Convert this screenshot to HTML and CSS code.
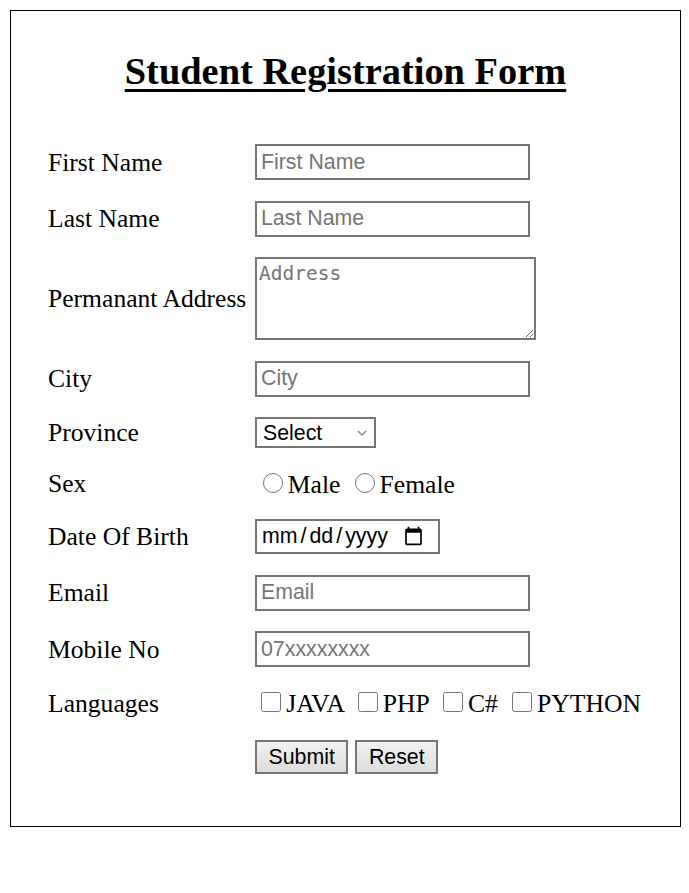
FILE: index.html
```html
<!DOCTYPE html>
<html lang="en">
<head>
<meta charset="utf-8">
<title>Student Registration Form</title>
<link rel="stylesheet" href="styles.css">
</head>
<body>
<div class="card">
  <h2 class="title">Student Registration Form</h2>
  <form class="form-grid">
    <label class="lbl">First Name</label>
    <input class="field" type="text" placeholder="First Name">

    <label class="lbl">Last Name</label>
    <input class="field" type="text" placeholder="Last Name">

    <label class="lbl">Permanant Address</label>
    <textarea class="area" placeholder="Address"></textarea>

    <label class="lbl">City</label>
    <input class="field" type="text" placeholder="City">

    <label class="lbl">Province</label>
    <select class="sel"><option>Select</option></select>

    <label class="lbl">Sex</label>
    <div class="opts"><label class="opt"><input class="radio" type="radio" name="sex">Male</label> <label class="opt"><input class="radio" type="radio" name="sex">Female</label></div>

    <label class="lbl">Date Of Birth</label>
    <input class="date" type="date">

    <label class="lbl">Email</label>
    <input class="field" type="email" placeholder="Email">

    <label class="lbl">Mobile No</label>
    <input class="field" type="text" placeholder="07xxxxxxxx">

    <label class="lbl">Languages</label>
    <div class="opts opts-lang"><label class="opt"><input class="check" type="checkbox">JAVA</label> <label class="opt"><input class="check" type="checkbox">PHP</label> <label class="opt"><input class="check" type="checkbox">C#</label> <label class="opt"><input class="check" type="checkbox">PYTHON</label></div>

    <span class="lbl"></span>
    <div class="btns">
      <button class="btn" type="submit">Submit</button>
      <button class="btn" type="reset">Reset</button>
    </div>
  </form>
</div>
</body>
</html>
```

FILE: styles.css
```css
body {
  margin: 0;
  background: #fff;
  font-family: "Liberation Serif", "Times New Roman", serif;
}

.card {
  margin: 10px;
  width: 671px;
  height: 817px;
  box-sizing: border-box;
  border: 1px solid #000;
}

.title {
  margin: 39px 0 51px;
  font-size: 38.4px;
  line-height: 43px;
  font-weight: bold;
  text-align: center;
  text-decoration: underline;
  text-decoration-thickness: 3px;
  text-underline-offset: 5px;
  color: #000;
}

.form-grid {
  display: grid;
  grid-template-columns: 207px auto;
  row-gap: 20.5px;
  align-items: center;
  justify-items: start;
  margin-left: 37px;
}

.lbl {
  font-size: 25.6px;
  line-height: 29px;
  color: #000;
}

.field,
.area,
.sel,
.date {
  box-sizing: border-box;
  border: 2px solid #767676;
  border-radius: 0;
  background: #fff;
  color: #000;
  margin: 0;
  outline: none;
}

.field {
  width: 275px;
  height: 36px;
  padding: 1px 4px;
  font: 21.33px "Liberation Sans", Arial, sans-serif;
}

.field::placeholder {
  color: #757575;
}

.area {
  width: 281px;
  height: 83px;
  padding: 3px 2px;
  font: 19.5px "DejaVu Sans Mono", "Liberation Mono", monospace;
  resize: both;
}

.area::placeholder {
  color: #757575;
}

.sel {
  width: 121px;
  height: 31px;
  padding: 0 20px 0 6px;
  font: 21.33px "Liberation Sans", Arial, sans-serif;
  -webkit-appearance: none;
  appearance: none;
  background-image: url("data:image/svg+xml,%3Csvg xmlns='http://www.w3.org/2000/svg' width='10' height='6' viewBox='0 0 10 6'%3E%3Cpath d='M1 1l4 4 4-4' fill='none' stroke='%23888' stroke-width='1.4'/%3E%3C/svg%3E");
  background-repeat: no-repeat;
  background-position: right 7px center;
  background-size: 10px 6px;
}

.date {
  width: 185px;
  height: 35px;
  padding: 1px 4px;
  font: 21.33px "Liberation Sans", Arial, sans-serif;
}

.date::-webkit-datetime-edit-text {
  padding: 0 2px;
}

.date::-webkit-calendar-picker-indicator {
  margin-right: 8px;
}

.opts {
  height: 30px;
  font-size: 25.6px;
  line-height: 30px;
  color: #000;
  white-space: nowrap;
}

.opts-lang {
  height: 32px;
  line-height: 32px;
}

.radio {
  width: 20px;
  height: 20px;
  margin: 4.8px 4.8px 0 8px;
}

.check {
  width: 20px;
  height: 20px;
  margin: 4.8px 4.8px 3px 8px;
}

.opt:first-child .check {
  margin-left: 6.4px;
}

.btns {
  display: flex;
  gap: 7px;
}

.btn {
  box-sizing: border-box;
  height: 34px;
  padding: 0 11.5px;
  font: 21.33px "Liberation Sans", Arial, sans-serif;
  color: #000;
  border: 2px solid #767676;
  border-radius: 0;
  background: linear-gradient(#f2f2f2, #dcdcdc);
}
```
